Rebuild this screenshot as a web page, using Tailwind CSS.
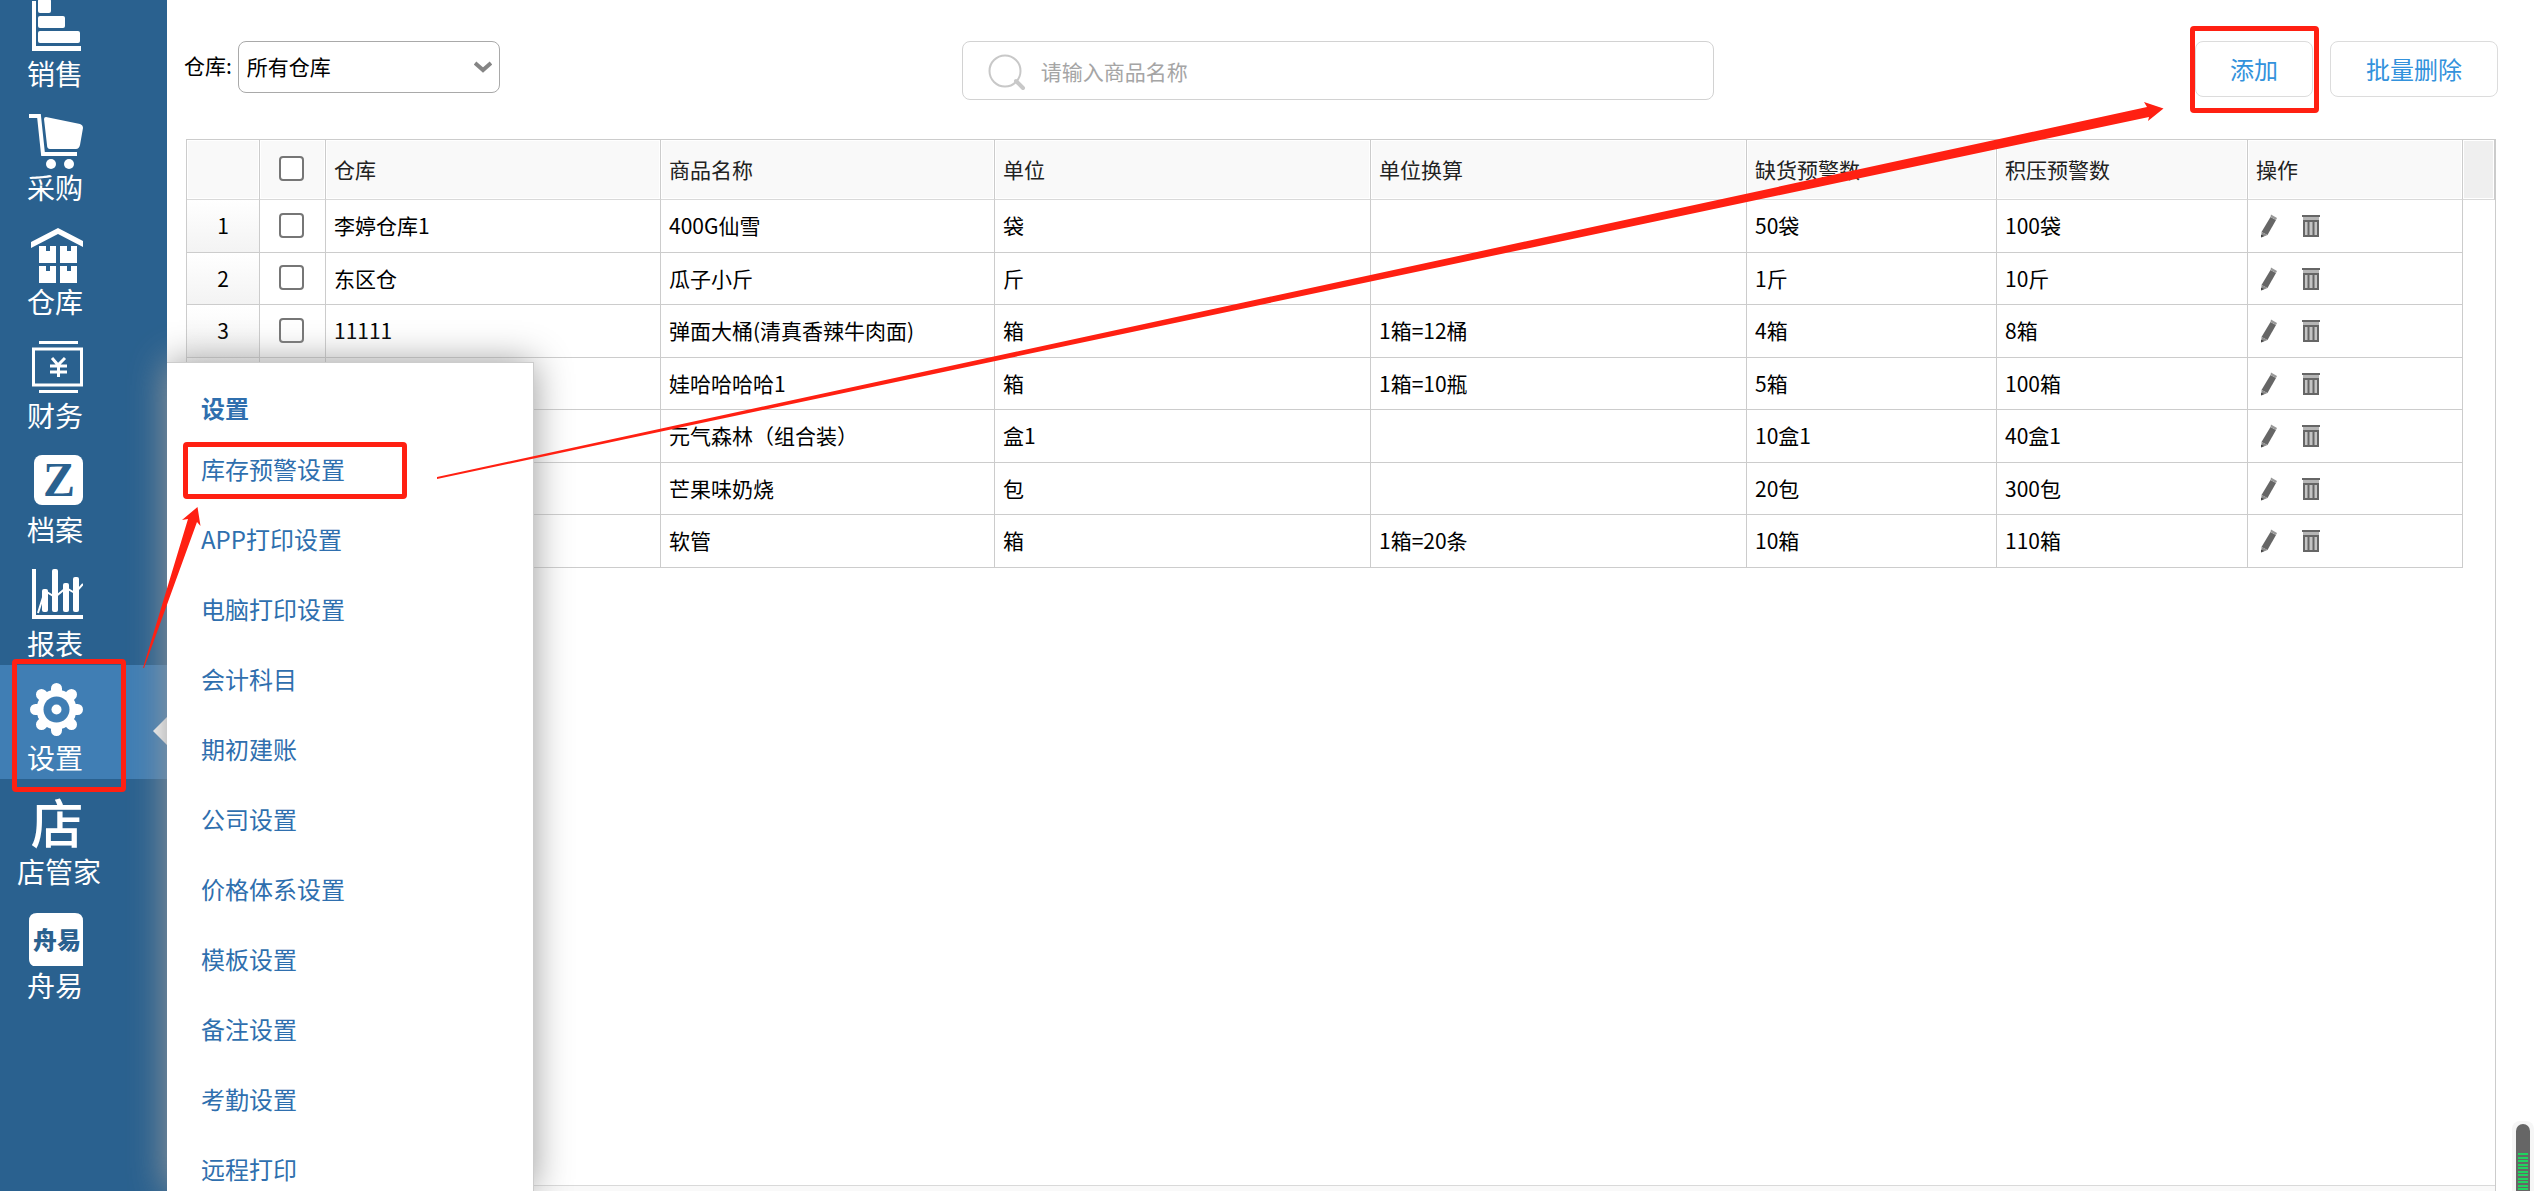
<!DOCTYPE html>
<html lang="zh-CN">
<head>
<meta charset="utf-8">
<title>库存预警设置</title>
<script src="https://cdn.jsdelivr.net/npm/@tailwindcss/browser@4"></script>
</head>
<body class="relative flex h-screen overflow-hidden bg-white font-['Noto_Sans_CJK_SC',sans-serif] text-[21px] text-black">

<svg class="hidden" aria-hidden="true">
  <symbol id="pencil" viewBox="0 0 18 24">
    <path d="M10.500 3 16 6 7.500 21 1.500 18Z" fill="#666"/>
    <path d="M1.500 18 7.500 21 1.500 23.500Z" fill="#8a8a8a"/>
    <path d="M1 20.500 4 22 1 23.600Z" fill="#444"/>
    <path d="M11 .5 17 4 16 6 10.500 3Z" fill="#999"/>
  </symbol>
  <symbol id="bin" viewBox="0 0 18 24">
    <path d="M0 1h18v2H0z" fill="#666"/>
    <path d="M1 3h16v3H1z" fill="#b5b5b5"/>
    <path d="M1 6h16v17H1z" fill="#c4c4c4"/>
    <path d="M2 7h14v15H2zM6.500 7v15M11.500 7v15" fill="none" stroke="#666" stroke-width="2"/>
  </symbol>
</svg>

<!-- Sidebar -->
<nav class="w-[167px] shrink-0 bg-[#2a618f] text-[28px] text-white" aria-label="主菜单">
  <ul class="-mt-[19px]">
    <li><a href="#" class="flex h-[114px] flex-col pt-[18px]">
      <span class="flex w-[110px] flex-col items-center"><svg class="size-[56px]" viewBox="0 0 56 56" fill="currentColor"><path d="M5 2h4v45h45v5H5z"/><rect x="11" y="0" width="13" height="14" rx="2"/><rect x="11" y="17" width="27" height="12" rx="2"/><rect x="11" y="32" width="42" height="12" rx="2"/></svg>
      <span class="leading-[37px]">销售</span></span></a></li>
    <li><a href="#" class="flex h-[114px] flex-col pt-[18px]">
      <span class="flex w-[110px] flex-col items-center"><svg class="size-[56px]" viewBox="0 0 56 56" fill="currentColor"><path d="M2 3h10l4 38h34" fill="none" stroke="currentColor" stroke-width="4"/><path d="M19 4 53 11q3 1 3 4l-3 17q-1 4-4 4H23q-3 0-3-4L17 6q0-2 2-2z"/><circle cx="24" cy="51" r="5"/><circle cx="42" cy="51" r="5"/></svg>
      <span class="leading-[37px]">采购</span></span></a></li>
    <li><a href="#" class="flex h-[114px] flex-col pt-[18px]">
      <span class="flex w-[110px] flex-col items-center"><svg class="size-[56px]" viewBox="0 0 56 56" fill="currentColor"><path d="M4 15 31 1 56 14v6L31 7 4 21z"/><path d="M12 19h7v5h4v-5h6v17H12zM33 19h7v5h4v-5h6v17H33zM12 39h7v5h4v-5h6v17H12zM33 39h7v5h4v-5h6v17H33z"/></svg>
      <span class="leading-[37px]">仓库</span></span></a></li>
    <li><a href="#" class="flex h-[114px] flex-col pt-[18px]">
      <span class="flex w-[110px] flex-col items-center"><svg class="size-[56px]" viewBox="0 0 56 56" fill="currentColor"><path d="M12 0h39v3H12zM12 49h39v3H12z"/><path d="M6.500 8h48v36h-48z" fill="none" stroke="currentColor" stroke-width="3"/><path d="m25 17 6 7 7-7M31.500 24v12M23 25h17M23 31h17" fill="none" stroke="currentColor" stroke-width="3"/></svg>
      <span class="leading-[37px]">财务</span></span></a></li>
    <li><a href="#" class="flex h-[114px] flex-col pt-[18px]">
      <span class="flex w-[110px] flex-col items-center"><svg class="size-[56px]" viewBox="0 0 56 56" fill="currentColor"><rect x="7" y="0" width="49" height="50" rx="8"/><text x="32" y="41" text-anchor="middle" class="fill-[#2a618f] font-['Liberation_Serif',serif] text-[48px] font-bold">Z</text></svg>
      <span class="leading-[37px]">档案</span></span></a></li>
    <li><a href="#" class="flex h-[114px] flex-col pt-[18px]">
      <span class="flex w-[110px] flex-col items-center"><svg class="size-[56px]" viewBox="0 0 56 56" fill="currentColor"><path d="M5 0h4v46h47v4H5z"/><rect x="15" y="20" width="6" height="23" rx="2"/><rect x="25" y="0" width="6" height="43" rx="2"/><rect x="36" y="14" width="6" height="29" rx="2"/><rect x="46" y="8" width="6" height="35" rx="2"/><path d="m11 44 7-22 10 6 11-9 9 5 8-9" fill="none" stroke="currentColor" stroke-width="2"/></svg>
      <span class="leading-[37px]">报表</span></span></a></li>
    <li class="relative"><a href="#" aria-current="page" class="flex h-[114px] flex-col bg-[#407eb4] pt-[18px]">
      <span class="flex w-[110px] flex-col items-center"><svg class="size-[56px]" viewBox="0 0 56 56" fill="currentColor"><g transform="translate(29.500 26.500)"><g stroke="currentColor" stroke-width="11" stroke-linecap="round"><path d="M0-21V21M-21 0H21M-15-15 15 15M15-15-15 15"/></g><circle r="20"/><circle r="13" fill="#407eb4"/><circle r="5"/></g></svg>
      <span class="leading-[37px]">设置</span></span></a>
      <span class="absolute top-[52px] right-0 size-0 border-y-14 border-r-14 border-y-transparent border-r-[#fafafa]"></span>
    </li>
    <li><a href="#" class="flex h-[114px] flex-col pt-[18px]">
      <span class="flex w-[118px] flex-col items-center"><svg class="size-[56px]" viewBox="0 0 56 56" fill="currentColor"><text x="26" y="47" text-anchor="middle" class="text-[53px] font-medium">店</text></svg>
      <span class="leading-[37px]">店管家</span></span></a></li>
    <li><a href="#" class="flex h-[114px] flex-col pt-[18px]">
      <span class="flex w-[110px] flex-col items-center"><svg class="size-[56px]" viewBox="0 0 56 56" fill="currentColor"><path d="M10 2h38q8 0 8 8v45H6q-4-2-4-7V10q0-8 8-8z"/><text x="30" y="38" text-anchor="middle" class="fill-[#2a618f] text-[24px] font-black">舟易</text></svg>
      <span class="leading-[37px]">舟易</span></span></a></li>
  </ul>
</nav>

<!-- Main area -->
<main class="flex min-w-0 flex-1 flex-col">
  <div class="flex h-[139px] shrink-0 items-start pt-[41px] pr-9 pl-[17px]">
    <label for="warehouse" class="leading-[49px]">仓库:</label>
    <div class="relative ml-1.5">
      <select id="warehouse" class="h-[52px] w-[262px] appearance-none rounded-lg border border-[#a9a9a9] bg-white pl-2">
        <option>所有仓库</option>
      </select>
      <svg class="pointer-events-none absolute top-5 right-2 h-[12px] w-[18px]" viewBox="0 0 18 12" fill="none" stroke="#858585" stroke-width="4"><path d="m1 2 8 7 8-7"/></svg>
    </div>
    <div class="relative ml-[462px] w-[752px] shrink">
      <svg class="absolute top-3 left-[26px] size-[38px]" viewBox="0 0 38 38" fill="none" stroke="#c8c8c8"><circle cx="17" cy="18" r="15.500" stroke-width="2"/><path d="m28 28 7 7" stroke-width="4" stroke-linecap="round"/></svg>
      <input type="text" aria-label="商品名称" placeholder="请输入商品名称" class="h-[59px] w-full rounded-lg border border-[#d2d2d2] bg-transparent pl-[78px] placeholder:text-[#a5a5a5]">
    </div>
    <div class="ml-auto flex gap-[17px] text-[24px] text-[#3392dc]">
      <div class="relative">
        <button type="button" class="h-[56px] w-[118px] rounded-lg border border-[#dcdcdc] bg-white">添加</button>
        <span class="pointer-events-none absolute -top-[15px] -right-1.5 -bottom-4 -left-[5px] rounded-sm border-5 border-[#ff2012]"></span>
      </div>
      <button type="button" class="h-[56px] w-[168px] rounded-lg border border-[#dcdcdc] bg-white">批量删除</button>
    </div>
  </div>

  <div class="mr-[38px] ml-[19px] flex min-h-0 flex-1 flex-col border border-b-0 border-[#ccc]">
    <table class="w-full table-fixed border-separate border-spacing-0 text-left">
      <colgroup>
        <col class="w-[73px]"><col class="w-[66px]"><col class="w-[335px]"><col class="w-[334px]"><col class="w-[376px]"><col class="w-[376px]"><col class="w-[250px]"><col class="w-[251px]"><col class="w-[215px]"><col class="w-[32px]">
      </colgroup>
      <thead>
        <tr class="h-[60px] bg-[#f9f9f9] text-[#222] *:border-r *:border-b *:border-r-[#ccc] *:border-b-[#d9d9d9] *:pl-2 *:font-normal *:inset-shadow-[0_0_0_1px_white]">
          <th></th>
          <th><input type="checkbox" aria-label="全选" class="mb-0.5 ml-[11px] block size-[25px] appearance-none rounded-sm border-2 border-[#767676] bg-white"></th>
          <th>仓库</th><th>商品名称</th><th>单位</th><th>单位换算</th><th>缺货预警数</th><th>积压预警数</th><th>操作</th>
          <td class="border-r-0 bg-[#efefef]"></td>
        </tr>
      </thead>
      <tbody id="rows"></tbody>
    </table>
    <div class="mt-auto h-[6px] border-t border-[#d9d9d9] bg-[#f9f9f9]"></div>
  </div>
</main>

<!-- Settings flyout -->
<aside class="absolute top-[362px] bottom-0 left-[167px] w-[367px] border-t border-r border-[#ccc] bg-white text-[24px] text-[#2f6fae] shadow-[0_0_35px_#999]">
  <div class="h-full overflow-hidden pt-[25px] pl-[34px]">
    <h2 class="mb-[6px] leading-[40px] font-bold">设置</h2>
    <ul class="leading-[70px]">
      <li class="relative"><a href="#">库存预警设置</a>
        <span class="pointer-events-none absolute top-[8px] -left-[18px] h-[57px] w-[224px] rounded-sm border-5 border-[#ff2012]"></span></li>
      <li><a href="#">APP打印设置</a></li>
      <li><a href="#">电脑打印设置</a></li>
      <li><a href="#">会计科目</a></li>
      <li><a href="#">期初建账</a></li>
      <li><a href="#">公司设置</a></li>
      <li><a href="#">价格体系设置</a></li>
      <li><a href="#">模板设置</a></li>
      <li><a href="#">备注设置</a></li>
      <li><a href="#">考勤设置</a></li>
      <li><a href="#">远程打印</a></li>
    </ul>
  </div>
</aside>

<!-- Guide marks -->
<span class="pointer-events-none absolute top-[659px] left-[12px] h-[133px] w-[114px] rounded-sm border-5 border-[#ff2012]"></span>
<svg class="pointer-events-none absolute top-0 left-0 h-[700px] w-[2200px]" viewBox="0 0 2200 700" fill="#ff2012" aria-hidden="true">
  <path d="M143 668 188 519 182 520 197.500 507 200.500 526 197 522 144 668Z"/>
  <path d="M437 477 2147 107 2144 102 2163.500 108.500 2148 121 2149 117 437 479Z"/>
</svg>

<!-- Level meter -->
<div class="absolute right-0 bottom-0 h-[70px] w-[22px] rounded-t-lg bg-[#f6f6f6] pt-[3px] pl-1">
  <div class="h-full w-[14px] rounded-t-[7px] bg-[#666] px-[2px] pt-[29px]">
    <div class="h-full bg-[repeating-linear-gradient(#1fd35f_0_2px,#666_2px_4px,#1fd35f_4px_6px,#666_6px_7px)]"></div>
  </div>
</div>

<script>
  const rows = [
    ['1', '李婷仓库1', '400G仙雪', '袋', '', '50袋', '100袋'],
    ['2', '东区仓', '瓜子小斤', '斤', '', '1斤', '10斤'],
    ['3', '11111', '弹面大桶(清真香辣牛肉面)', '箱', '1箱=12桶', '4箱', '8箱'],
    ['', '', '娃哈哈哈哈1', '箱', '1箱=10瓶', '5箱', '100箱'],
    ['', '', '元气森林（组合装）', '盒1', '', '10盒1', '40盒1'],
    ['', '', '芒果味奶烧', '包', '', '20包', '300包'],
    ['', '', '软管', '箱', '1箱=20条', '10箱', '110箱']
  ];
  document.getElementById('rows').innerHTML = rows.map(([no, ...cells], i) => `
    <tr class="h-[53px] even:h-[52px]">
      <td class="border-r border-b border-[#ccc] bg-linear-to-b from-white to-[#f3f3f3] text-center">${no}</td>
      <td class="border-r border-b border-[#ccc] pl-[19px]"><input type="checkbox" aria-label="选择第${i + 1}行" class="mb-0.5 block size-[25px] appearance-none rounded-sm border-2 border-[#767676] bg-white"></td>
      ${cells.map(c => `<td class="border-r border-b border-[#ccc] pl-2 whitespace-nowrap">${c}</td>`).join('')}
      <td class="border-r border-b border-[#ccc] pl-[12px]"><div class="flex gap-6">
        <button type="button" aria-label="编辑"><svg class="block h-[24px] w-[18px]"><use href="#pencil"/></svg></button>
        <button type="button" aria-label="删除"><svg class="block h-[24px] w-[18px]"><use href="#bin"/></svg></button>
      </div></td>
      <td></td>
    </tr>`).join('');
</script>
</body>
</html>
